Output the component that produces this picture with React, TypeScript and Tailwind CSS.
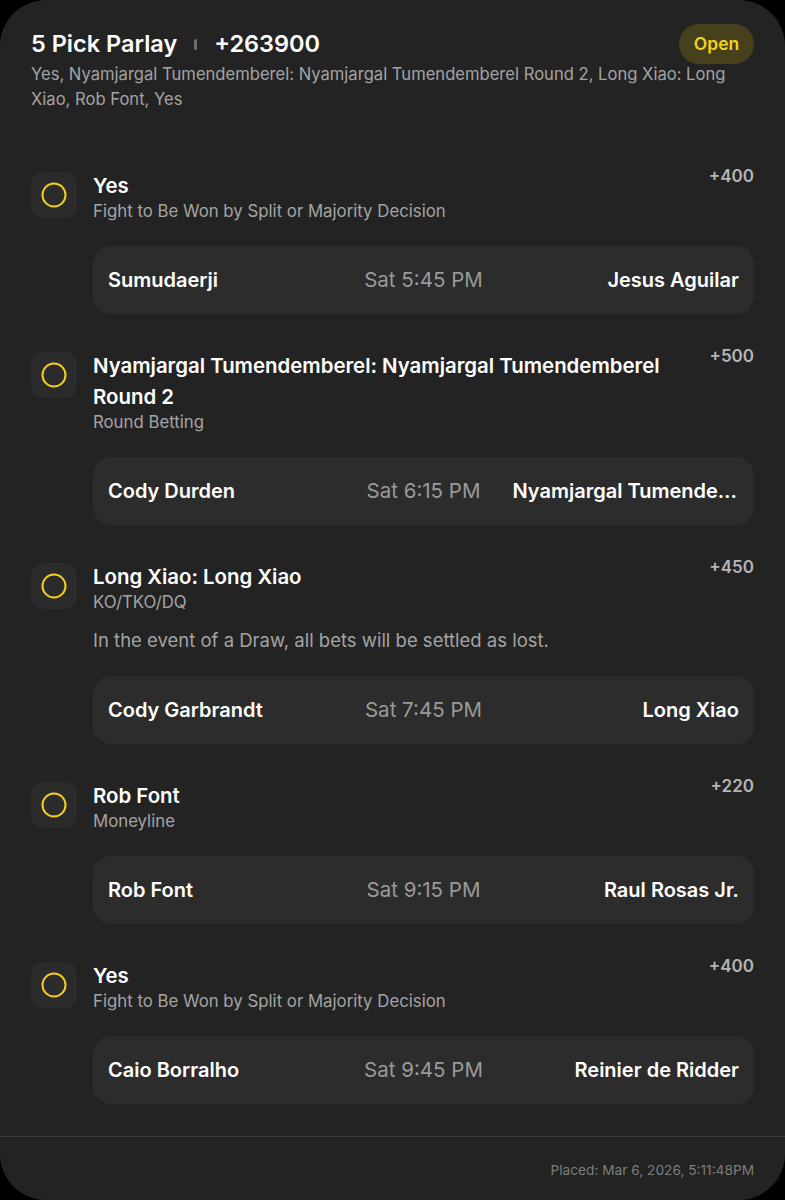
import React from "react";

interface Leg {
  title: string;
  market: string;
  odds: string;
  note?: string;
  home: string;
  time: string;
  away: string;
}

const legs: Leg[] = [
  {
    title: "Yes",
    market: "Fight to Be Won by Split or Majority Decision",
    odds: "+400",
    home: "Sumudaerji",
    time: "Sat 5:45 PM",
    away: "Jesus Aguilar",
  },
  {
    title: "Nyamjargal Tumendemberel: Nyamjargal Tumendemberel Round 2",
    market: "Round Betting",
    odds: "+500",
    home: "Cody Durden",
    time: "Sat 6:15 PM",
    away: "Nyamjargal Tumendemberel",
  },
  {
    title: "Long Xiao: Long Xiao",
    market: "KO/TKO/DQ",
    odds: "+450",
    note: "In the event of a Draw, all bets will be settled as lost.",
    home: "Cody Garbrandt",
    time: "Sat 7:45 PM",
    away: "Long Xiao",
  },
  {
    title: "Rob Font",
    market: "Moneyline",
    odds: "+220",
    home: "Rob Font",
    time: "Sat 9:15 PM",
    away: "Raul Rosas Jr.",
  },
  {
    title: "Yes",
    market: "Fight to Be Won by Split or Majority Decision",
    odds: "+400",
    home: "Caio Borralho",
    time: "Sat 9:45 PM",
    away: "Reinier de Ridder",
  },
];

// 未確定レッグのアイコン
const PendingIcon = () => (
  <div className="mt-[2px] flex h-[46px] w-[46px] shrink-0 items-center justify-center rounded-[12px] bg-[#2b2b2b]">
    <svg width="26" height="26" viewBox="0 0 26 26">
      <circle cx="13" cy="13" r="11.5" fill="none" stroke="#f2cf1d" strokeWidth="2" />
    </svg>
  </div>
);

const LegRow = ({ leg }: { leg: Leg }) => (
  <div className="flex gap-4">
    <PendingIcon />
    <div className="min-w-0 flex-1">
      <div className="flex items-start justify-between gap-6">
        <div className="min-w-0">
          <p className="text-[20.4px] font-semibold leading-[31px] text-white">{leg.title}</p>
          <p className="-mt-[2px] text-[16.8px] leading-6 text-[#a3a3a3]">{leg.market}</p>
        </div>
        <span className="-mt-[4px] shrink-0 text-[17px] font-semibold leading-5 text-[#b5b5b5]">
          {leg.odds}
        </span>
      </div>
      {leg.note && <p className="mt-[13px] text-[18.5px] leading-[26px] text-[#a3a3a3]">{leg.note}</p>}
      <div className="mt-[23px] grid h-[68px] grid-cols-[1fr_auto_1fr] items-center gap-8 rounded-[18px] bg-[#2c2c2c] px-[15px] text-[20px]">
        <span className="truncate font-semibold text-white">{leg.home}</span>
        <span className="text-[20.5px] text-[#9a9a9a]">{leg.time}</span>
        <span className="truncate text-right font-semibold text-white">{leg.away}</span>
      </div>
    </div>
  </div>
);

export default function App() {
  return (
    <div className="min-h-[1200px] bg-black" style={{ fontFamily: "Inter, 'Noto Sans', sans-serif" }}>
      <div className="flex h-[1200px] flex-col rounded-[46px] bg-[#232323]">
        {/* ヘッダー */}
        <div className="px-[31px] pt-6">
          <div className="flex items-center justify-between">
            <div className="flex items-center gap-[17px] text-[23.5px] font-semibold leading-7 text-white">
              <span>5 Pick Parlay</span>
              <span className="h-[11px] w-[3px] rounded-full bg-[#6e6e6e]" />
              <span>+263900</span>
            </div>
            <span className="flex h-10 w-[75px] items-center justify-center rounded-full bg-[#47401d] text-[17.5px] font-semibold text-[#f2d21a]">
              Open
            </span>
          </div>
          <p className="-mt-[2px] pr-2 text-[16.6px] leading-[25px] text-[#a3a3a3]">
            Yes, Nyamjargal Tumendemberel: Nyamjargal Tumendemberel Round 2, Long Xiao: Long Xiao, Rob Font, Yes
          </p>
        </div>

        {/* レッグ一覧 */}
        <div className="mt-[58px] flex flex-col gap-9 px-[31px]">
          {legs.map((leg, i) => (
            <LegRow key={i} leg={leg} />
          ))}
        </div>

        {/* フッター */}
        <div className="mt-8 border-t border-[#3a3a3a] px-[31px] pt-[24px]">
          <p className="text-right text-[13.7px] leading-[18px] text-[#7d7d7d]">Placed: Mar 6, 2026, 5:11:48PM</p>
        </div>
      </div>
    </div>
  );
}
